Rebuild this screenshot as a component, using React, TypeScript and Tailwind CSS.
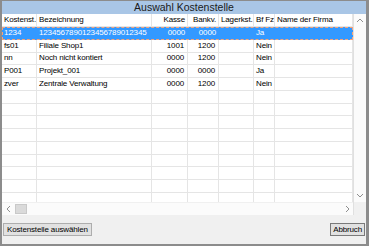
import React from "react";

type Col = { key: string; label: string; w: string; right?: boolean };

const COLS: Col[] = [
  { key: "nr", label: "Kostenst.", w: "w-[35px]" },
  { key: "bez", label: "Bezeichnung", w: "w-[115px]" },
  { key: "kasse", label: "Kasse", w: "w-[36px]", right: true },
  { key: "bank", label: "Bankv.", w: "w-[31px]", right: true },
  { key: "lager", label: "Lagerkst.", w: "w-[35px]" },
  { key: "bf", label: "Bf Fz", w: "w-[21px]" },
  { key: "firma", label: "Name der Firma", w: "w-[78px]" },
];

const ROWS: Record<string, string>[] = [
  { nr: "1234", bez: "1234567890123456789012345", kasse: "0000", bank: "0000", lager: "", bf: "Ja", firma: "" },
  { nr: "fs01", bez: "Filiale Shop1", kasse: "1001", bank: "1200", lager: "", bf: "Nein", firma: "" },
  { nr: "nn", bez: "Noch nicht kontiert", kasse: "0000", bank: "1200", lager: "", bf: "Nein", firma: "" },
  { nr: "P001", bez: "Projekt_001", kasse: "0000", bank: "0000", lager: "", bf: "Ja", firma: "" },
  { nr: "zver", bez: "Zentrale Verwaltung", kasse: "0000", bank: "1200", lager: "", bf: "Nein", firma: "" },
];

const EMPTY_ROWS = 11;

function Chevron({ dir }: { dir: "up" | "down" | "left" | "right" }) {
  const paths = {
    up: "M1 5 L4 2 L7 5",
    down: "M1 2 L4 5 L7 2",
    left: "M5 1 L2 4 L5 7",
    right: "M3 1 L6 4 L3 7",
  };
  return (
    <svg width="8" height="8" viewBox="0 0 8 8" fill="none">
      <path d={paths[dir]} stroke="#8f8f8f" strokeWidth="1" />
    </svg>
  );
}

export default function App() {
  return (
    <div className="w-[369px] h-[246px] flex flex-col border-t border-l-2 border-r-[3px] border-b-2 border-[#8c8c8c] bg-[#f0f0f0] font-['Liberation_Sans',Arial,sans-serif] text-[8px] tracking-[-0.15px] text-black leading-none select-none">
      {/* Title */}
      <div className="h-[13px] shrink-0 flex items-center justify-center bg-[#a9c6e6] text-[10.5px] tracking-normal text-[#1a1a1a]">
        Auswahl Kostenstelle
      </div>

      {/* Grid + vertical scrollbar */}
      <div className="h-[201px] shrink-0 flex bg-white">
        <div className="w-[351px] flex flex-col overflow-hidden">
          {/* Header */}
          <div className="h-[13px] shrink-0 flex border-b border-[#e5e5e5]">
            {COLS.map((c) => (
              <div
                key={c.key}
                className={`${c.w} shrink-0 flex items-center border-r border-[#e5e5e5] overflow-hidden whitespace-nowrap px-[2px] ${c.right ? "justify-end" : ""}`}
              >
                {c.label}
              </div>
            ))}
          </div>

          {/* Rows */}
          <div className="flex-1 flex flex-col overflow-hidden">
            {ROWS.map((r, i) => {
              const selected = i === 0;
              return (
                <div
                  key={i}
                  className={`h-[12.75px] shrink-0 flex relative ${selected ? "bg-[#3399ff] text-white" : ""}`}
                >
                  {COLS.map((c) => (
                    <div
                      key={c.key}
                      className={`${c.w} shrink-0 flex items-center overflow-hidden whitespace-nowrap px-[2px] ${c.right ? "justify-end pr-[3px]" : ""} ${selected ? "" : "border-r border-b border-[#e5e5e5]"}`}
                    >
                      {r[c.key]}
                    </div>
                  ))}
                  {selected && (
                    <div className="absolute inset-0 border border-dashed border-[#f6a27a] pointer-events-none" />
                  )}
                </div>
              );
            })}
            {Array.from({ length: EMPTY_ROWS }).map((_, i) => (
              <div key={`e${i}`} className="h-[12.75px] shrink-0 flex">
                {COLS.map((c) => (
                  <div key={c.key} className={`${c.w} shrink-0 border-r border-b border-[#e5e5e5]`} />
                ))}
              </div>
            ))}
          </div>

          {/* Horizontal scrollbar */}
          <div className="h-[13px] shrink-0 flex items-center bg-[#fbfbfb] border-t border-[#f0f0f0]">
            <div className="w-[13px] h-full flex items-center justify-center">
              <Chevron dir="left" />
            </div>
            <div className="w-[12px] h-[10px] bg-[#dadada] border border-[#c9c9c9]" />
            <div className="flex-1" />
            <div className="w-[13px] h-full flex items-center justify-center">
              <Chevron dir="right" />
            </div>
          </div>
        </div>

        {/* Vertical scrollbar */}
        <div className="w-[13px] shrink-0 flex flex-col border-l border-[#e0e0e0] bg-[#fbfbfb]">
          <div className="h-[13px] flex items-center justify-center">
            <Chevron dir="up" />
          </div>
          <div className="flex-1" />
          <div className="h-[13px] flex items-center justify-center">
            <Chevron dir="down" />
          </div>
          <div className="h-[13px] bg-[#f0f0f0]" />
        </div>
      </div>

      {/* Buttons */}
      <div className="flex-1 flex items-center justify-between px-[1px]">
        <button className="h-[13px] px-[3px] border border-[#adadad] bg-[#e1e1e1] text-[8px] leading-none">
          Kostenstelle auswählen
        </button>
        <button className="h-[13px] px-[2px] border border-[#7a7a7a] bg-[#e1e1e1] text-[8px] leading-none">
          Abbruch
        </button>
      </div>
    </div>
  );
}
